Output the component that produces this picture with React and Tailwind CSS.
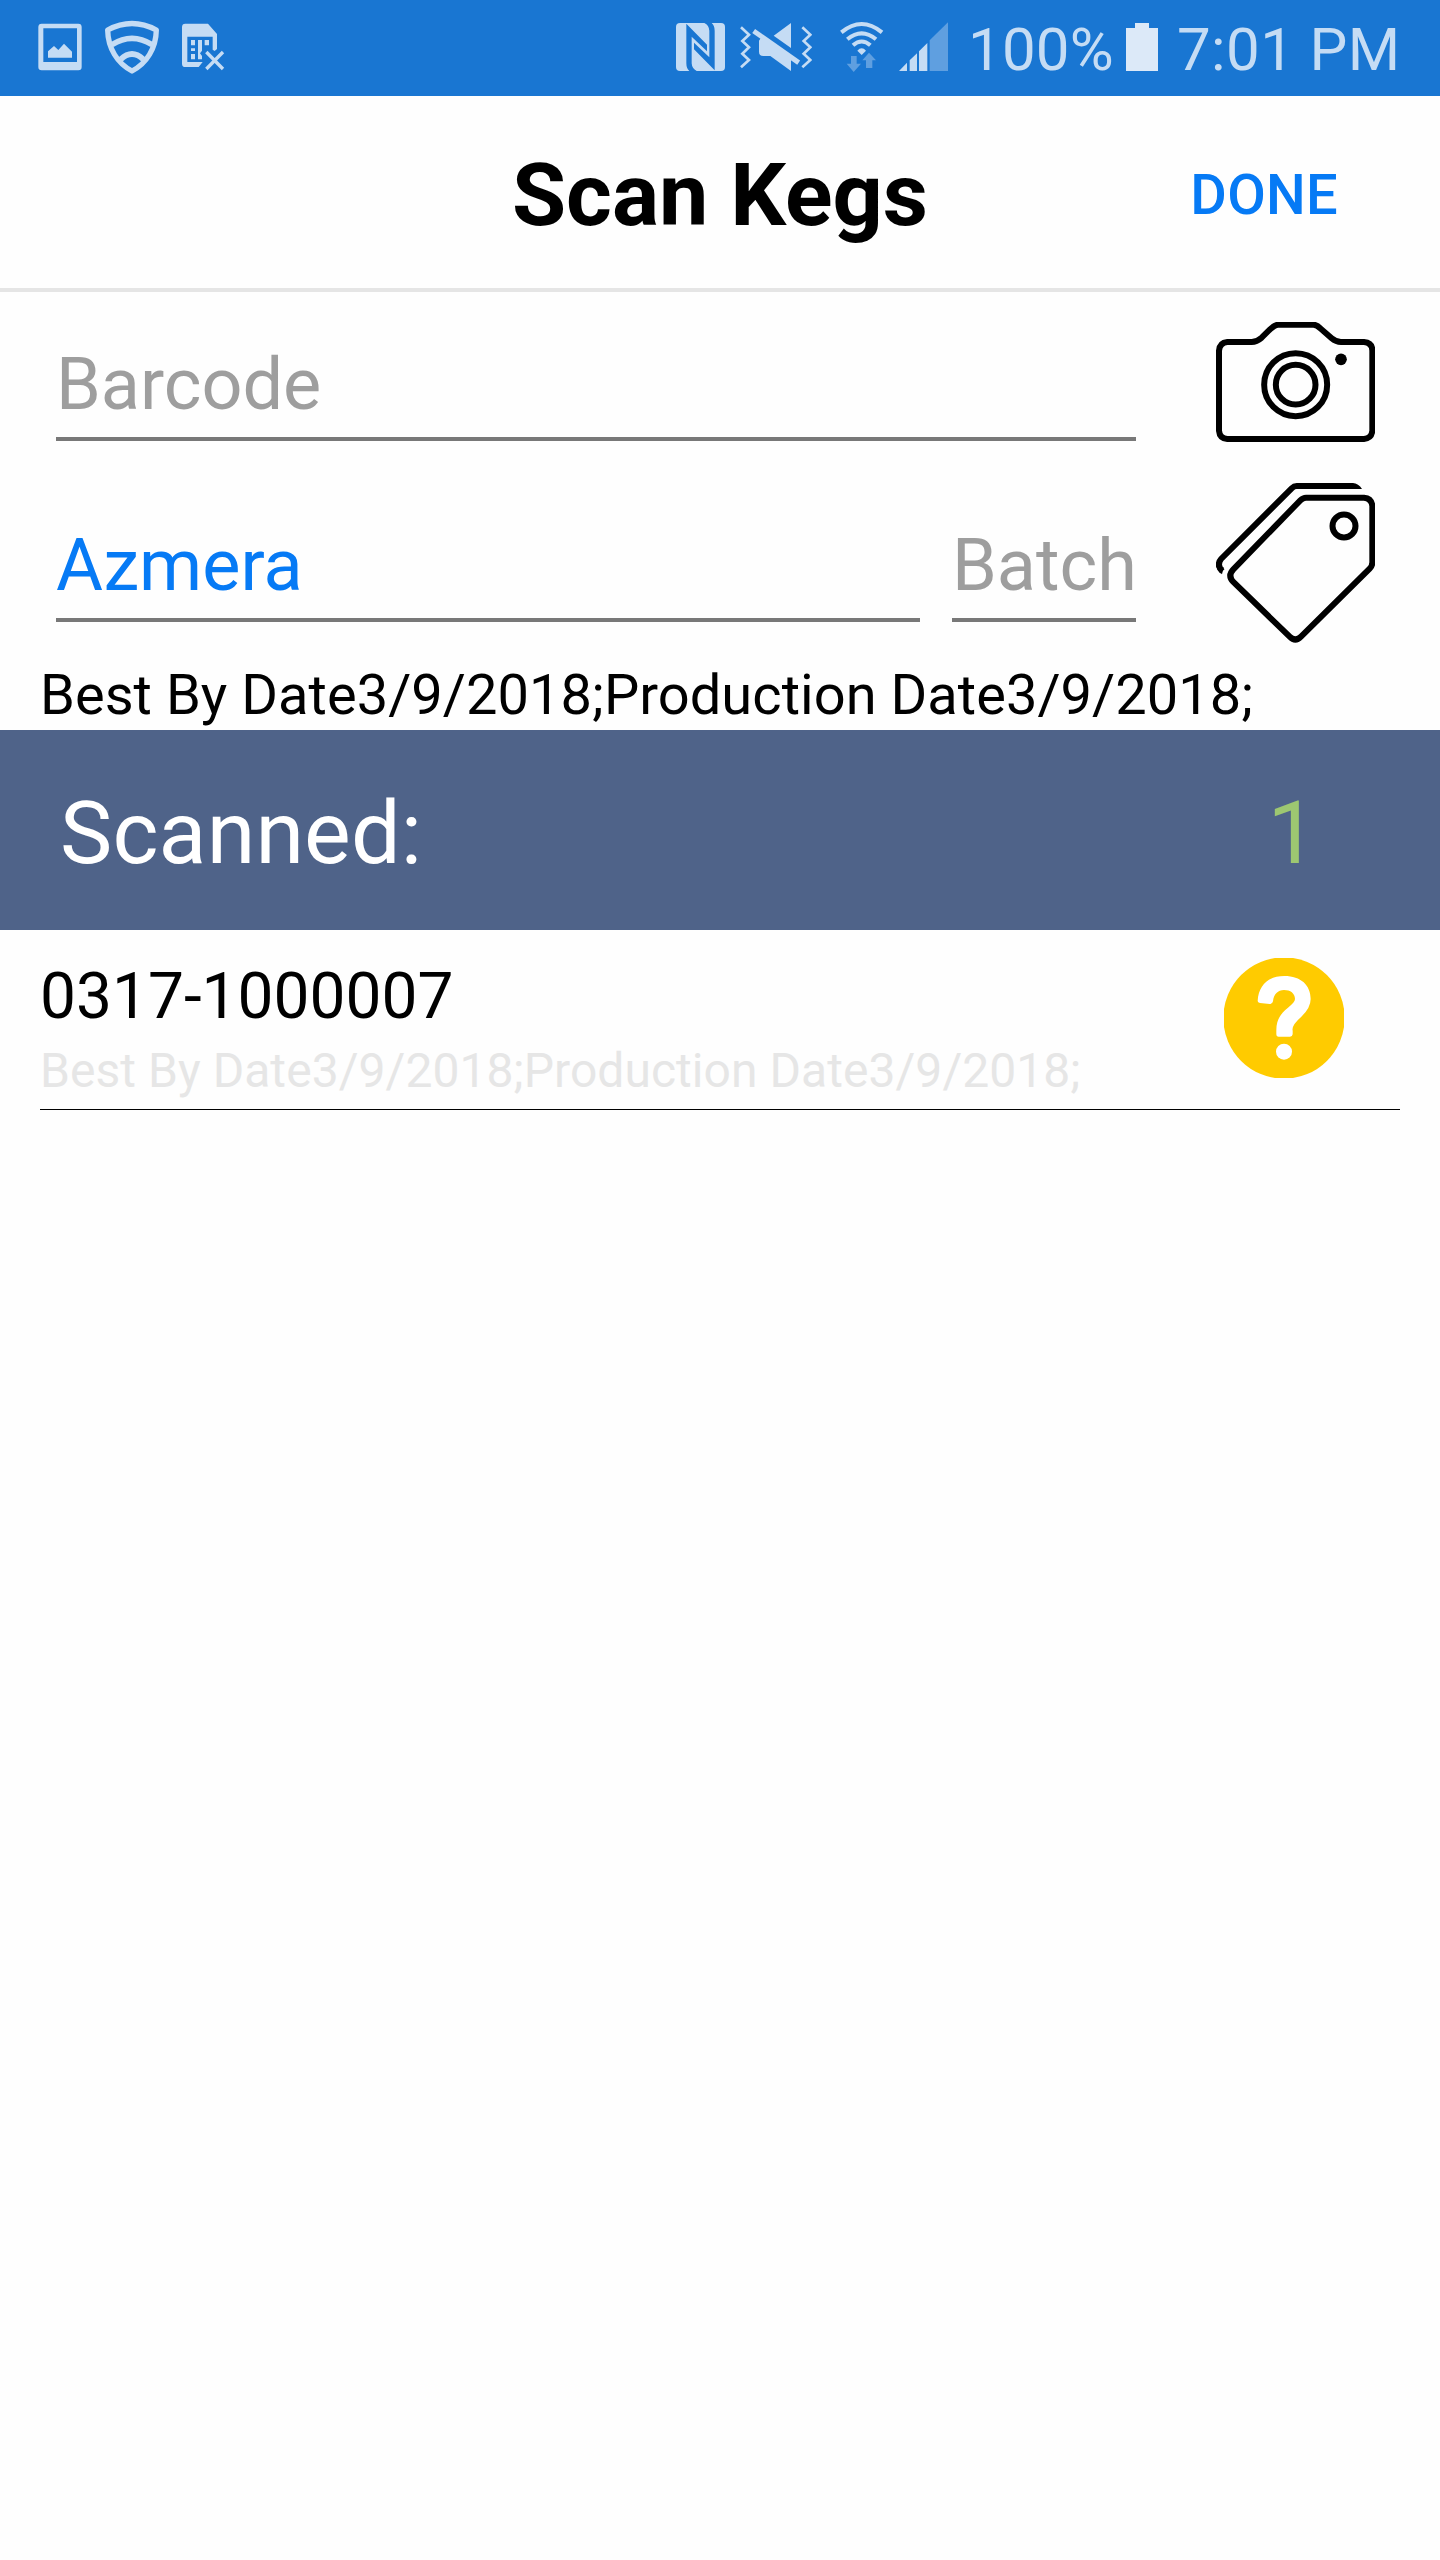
function PictureIcon() {
  return (
    <svg viewBox="114 60 132 168" className="h-14 w-11 fill-[#c5dcf4]">
      <path fillRule="evenodd" d="M125 71H235Q245 71 245 81V201Q245 211 235 211H125Q115 211 115 201V81Q115 71 125 71ZM130 85V186H231V85Z" />
      <path d="M144 173V154L162 138L175 150L192 131L216 155V173Z" />
    </svg>
  );
}

function ShieldIcon() {
  return (
    <svg viewBox="312 60 168 168" className="ml-[22px] size-14 fill-none stroke-[#c5dcf4]">
      <path strokeWidth="16" strokeLinejoin="round" d="M323 90Q396 51 469 90C468 145 440 190 396 213C352 190 324 145 323 90Z" />
      <path strokeWidth="17" d="M336 134Q396 96 456 134" />
      <path strokeWidth="17" d="M362 178Q396 146 430 178" />
    </svg>
  );
}

function SimErrorIcon() {
  return (
    <svg viewBox="546 60 129 168" className="ml-[22px] h-14 w-[43px] fill-[#c5dcf4]">
      <path fillRule="evenodd" d="M556 71H624L651 102V147L644 153L638 149V110H562V186H608L596 201H556Q546 201 546 191V81Q546 71 556 71Z" />
      <path d="M573 120H585V136H573ZM594 120H606V152L600 160L606 168V178H594ZM614 120H627V136H614ZM573 145H585V153H573ZM573 162H585V178H573Z" />
      <path className="stroke-[#c5dcf4]" strokeWidth="10" d="M619 156L669 207M669 156L619 207" />
    </svg>
  );
}

function NfcIcon() {
  return (
    <svg viewBox="48 60 147 168" className="h-14 w-[49px]">
      <rect x="48" y="69" width="147" height="144" rx="12" className="fill-[#c5dcf4]" />
      <path className="fill-[#1976d2]" d="M79 71L141 134V154L95 110V190Q96 206 110 213H88Q79 205 79 190Z" />
      <path className="fill-[#1976d2]" d="M164 211L102 148V128L148 172V92Q147 76 133 69H155Q164 77 164 92Z" />
    </svg>
  );
}

function VibrateMuteIcon() {
  return (
    <svg viewBox="240 60 216 168" className="ml-[15px] h-14 w-[72px] fill-[#c5dcf4]">
      <g className="fill-none stroke-[#c5dcf4]" strokeWidth="8">
        <path d="M243 82L267 104L247 123L267 142L247 161L267 180L243 202" />
        <path d="M427 82L451 104L431 123L451 142L431 161L451 180L427 202" />
      </g>
      <path className="stroke-[#c5dcf4]" strokeWidth="15" d="M281 93L416 188" />
      <path d="M393 69V144L341 107ZM304 112L393 176V213L331 168H310Q297 168 297 155V122Z" />
    </svg>
  );
}

function WifiIcon() {
  return (
    <svg viewBox="540 60 132 168" className="ml-7 h-14 w-11 fill-[#c5dcf4]">
      <g className="fill-none stroke-[#c5dcf4]" strokeWidth="12">
        <path d="M544 97Q605 47 666 97" />
        <path d="M562 118Q605 82 648 118" />
        <path d="M579 136Q605 113 631 136" />
      </g>
      <path d="M592 152Q605 138 618 152L605 165Z" />
      <path className="fill-[#5f9fe0]" d="M573 168H590V191H603L581 216L560 191H573ZM627 158L648 181H637V204H618V181H607Z" />
    </svg>
  );
}

function SignalIcon() {
  return (
    <svg viewBox="717 60 147 168" className="ml-[15px] h-14 w-[49px] fill-[#c5dcf4]">
      <path d="M717 213L741 188V213ZM749 213V181L771 160V213ZM777 213V154L802 129V213Z" />
      <path className="fill-[#5f9fe0]" d="M809 213V121L864 67V213Z" />
    </svg>
  );
}

function BatteryIcon() {
  return (
    <svg viewBox="558 60 96 168" className="h-14 w-8 fill-[#dce9f8]">
      <path d="M585 69H627V84H654V213H558V84H585Z" />
    </svg>
  );
}

function StatusBar() {
  return (
    <div className="flex h-24 items-start bg-[#1976d2] pt-5 pl-[38px] text-[60px] leading-[60px] text-[#c5dcf4]">
      <PictureIcon />
      <ShieldIcon />
      <SimErrorIcon />
      <div className="ml-[451px] flex">
        <NfcIcon />
        <VibrateMuteIcon />
        <WifiIcon />
        <SignalIcon />
        <span className="ml-[20px] w-[158px] tracking-[0.2px] whitespace-nowrap">100%</span>
        <BatteryIcon />
        <span className="ml-[19px] tracking-[0.4px] whitespace-nowrap">7:01 PM</span>
      </div>
    </div>
  );
}

function CameraIcon() {
  return (
    <svg viewBox="78 66 477 360" className="h-[120px] w-[159px] fill-none stroke-black" strokeWidth="18">
      <path d="M112 126H185Q200 126 215 113L240 88Q255 74 265 74H370Q380 74 392 86L425 115Q438 126 453 126H522Q547 128 547 152V392Q545 415 522 417H112Q89 415 87 392V152Q89 128 112 126Z" />
      <circle cx="317" cy="254" r="94.5" />
      <circle cx="317" cy="254" r="59.5" />
      <circle cx="453" cy="178" r="17.5" className="fill-black stroke-none" />
    </svg>
  );
}

function TagsIcon() {
  return (
    <svg viewBox="78 549 477 480" className="mt-[41px] h-[160px] w-[159px] fill-none stroke-black" strokeWidth="18">
      <path d="M348 593H522Q545 595 547 618V787Q547 798 539 806L333 1010Q316 1027 299 1010L130 846Q112 827 130 808L331 601Q339 593 348 593Z" />
      <path d="M97 814Q78 795 94 776L305 565Q312 558 320 558H490" />
      <path className="fill-black stroke-none" d="M488 549Q506 550 516 567H480ZM78 792Q79 810 96 823L101 802Z" />
      <circle cx="462" cy="678" r="34.5" />
    </svg>
  );
}

function QuestionBadge() {
  return (
    <svg viewBox="72 84 360 360" className="mt-7 size-[120px]">
      <circle cx="252" cy="264" r="182" className="fill-[#ffcb00]" />
      <path className="fill-white" d="M173 213C176 164 206 138 253 138C303 138 332 166 332 207Q332 234 304 260Q274 286 278 302V313Q277 320 270 320H236Q229 320 229 312V300C229 268 243 250 264 233Q285 216 285 207C285 190 271 180 252 180C234 180 221 192 219 214Q217 223 209 222L180 219Q173 218 173 213Z" />
      <circle cx="252" cy="365" r="24" className="fill-white" />
    </svg>
  );
}

function Field({ className, children }) {
  return (
    <div className={`border-b-4 border-[#787878] text-[72px] leading-[105px] whitespace-nowrap ${className}`}>
      {children}
    </div>
  );
}

export default function App() {
  return (
    <div className="h-[2560px] w-[1440px] overflow-hidden bg-[#fefefe] font-[Roboto,sans-serif] text-black">
      <StatusBar />

      <header className="grid h-[196px] grid-cols-3 items-center border-b-4 border-[#e5e5e5] pt-1.5">
        <h1 className="col-start-2 text-center text-[88px] leading-[100px] font-bold whitespace-nowrap">Scan Kegs</h1>
        <button className="justify-self-end pr-[102px] text-[56px] leading-[66px] font-medium tracking-[0.3px] text-[#067af5]">DONE</button>
      </header>

      <section className="flex h-[351px] pl-14">
        <div className="w-[1080px]">
          <Field className="h-[149px] pt-10 text-[#9e9e9e]">Barcode</Field>
          <div className="flex gap-8">
            <Field className="h-[181px] w-[864px] pt-[72px] text-[#067af5]">Azmera</Field>
            <Field className="h-[181px] w-[184px] pt-[72px] text-[#9e9e9e]">Batch</Field>
          </div>
        </div>
        <div className="ml-20 pt-[30px]">
          <CameraIcon />
          <TagsIcon />
        </div>
      </section>

      <p className="h-[87px] pt-[17px] pl-10 text-[56px] leading-[70px] tracking-[0.04px] whitespace-nowrap">
        Best By Date3/9/2018;Production Date3/9/2018;
      </p>

      <div className="flex h-[200px] items-center justify-between bg-[#4f6389] pt-1.5 pr-[123px] pl-[60px] text-[88px] leading-none text-white">
        <span className="tracking-[0.15px]">Scanned:</span>
        <span className="text-[#9dc771]">1</span>
      </div>

      <div className="mx-10 flex h-[180px] justify-between border-b border-black pr-14">
        <div className="pt-[27px] whitespace-nowrap">
          <div className="text-[64px] leading-[80px]">0317-1000007</div>
          <div className="text-[48px] leading-[68px] tracking-[0.05px] text-[#e6e6e6]">Best By Date3/9/2018;Production Date3/9/2018;</div>
        </div>
        <QuestionBadge />
      </div>
    </div>
  );
}
